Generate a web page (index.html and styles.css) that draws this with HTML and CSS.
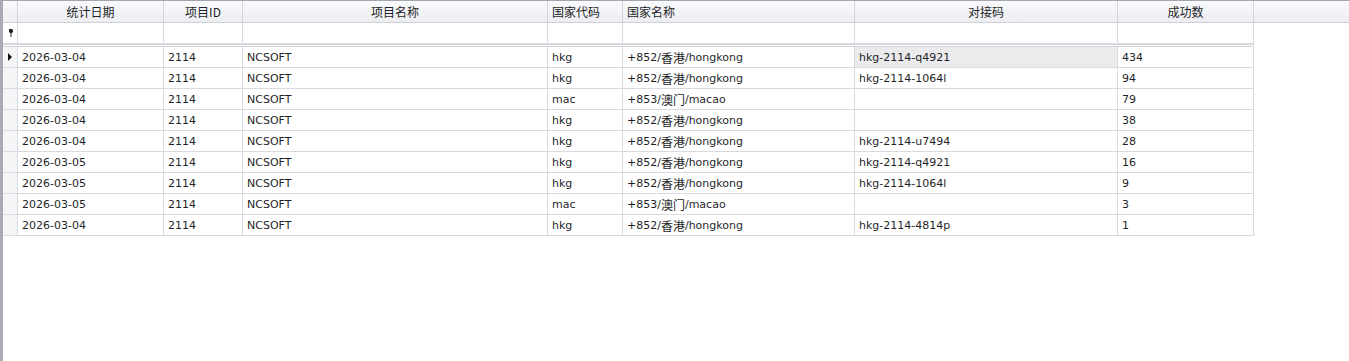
FILE: index.html
```html
<!DOCTYPE html>
<html lang="zh">
<head>
<meta charset="utf-8">
<title>Grid</title>
<link rel="stylesheet" href="styles.css">
</head>
<body>
<div class="grid">
  <div class="hdr">
    <div class="hc ind"></div>
    <div class="hc c1 ctr">统计日期</div>
    <div class="hc c2 ctr">项目ID</div>
    <div class="hc c3 ctr">项目名称</div>
    <div class="hc c4">国家代码</div>
    <div class="hc c5">国家名称</div>
    <div class="hc c6 ctr">对接码</div>
    <div class="hc c7 ctr">成功数</div>
    <div class="hc fill"></div>
  </div>
  <div class="row filter">
    <div class="cell ind"><svg width="6" height="8" viewBox="0 0 6 8"><path d="M1 0h3l1 1v2l-1 1h-0.5v4h-1v-4h-0.5l-1-1v-2z" fill="#222"/></svg></div>
    <div class="cell"></div><div class="cell"></div><div class="cell"></div><div class="cell"></div><div class="cell"></div><div class="cell"></div><div class="cell"></div>
  </div>
  <div class="sep"></div>
  <div class="row">
    <div class="cell ind"><svg width="5" height="8" viewBox="0 0 5 8"><path d="M0 0l4 4l-4 4z" fill="#111"/></svg></div>
    <div class="cell">2026-03-04</div><div class="cell">2114</div><div class="cell">NCSOFT</div><div class="cell">hkg</div><div class="cell">+852/<span class="cjk">香港</span>/hongkong</div><div class="cell focus">hkg-2114-q4921</div><div class="cell">434</div>
  </div>
  <div class="row">
    <div class="cell ind"></div>
    <div class="cell">2026-03-04</div><div class="cell">2114</div><div class="cell">NCSOFT</div><div class="cell">hkg</div><div class="cell">+852/<span class="cjk">香港</span>/hongkong</div><div class="cell">hkg-2114-1064l</div><div class="cell">94</div>
  </div>
  <div class="row">
    <div class="cell ind"></div>
    <div class="cell">2026-03-04</div><div class="cell">2114</div><div class="cell">NCSOFT</div><div class="cell">mac</div><div class="cell">+853/<span class="cjk">澳门</span>/macao</div><div class="cell"></div><div class="cell">79</div>
  </div>
  <div class="row">
    <div class="cell ind"></div>
    <div class="cell">2026-03-04</div><div class="cell">2114</div><div class="cell">NCSOFT</div><div class="cell">hkg</div><div class="cell">+852/<span class="cjk">香港</span>/hongkong</div><div class="cell"></div><div class="cell">38</div>
  </div>
  <div class="row">
    <div class="cell ind"></div>
    <div class="cell">2026-03-04</div><div class="cell">2114</div><div class="cell">NCSOFT</div><div class="cell">hkg</div><div class="cell">+852/<span class="cjk">香港</span>/hongkong</div><div class="cell">hkg-2114-u7494</div><div class="cell">28</div>
  </div>
  <div class="row">
    <div class="cell ind"></div>
    <div class="cell">2026-03-05</div><div class="cell">2114</div><div class="cell">NCSOFT</div><div class="cell">hkg</div><div class="cell">+852/<span class="cjk">香港</span>/hongkong</div><div class="cell">hkg-2114-q4921</div><div class="cell">16</div>
  </div>
  <div class="row">
    <div class="cell ind"></div>
    <div class="cell">2026-03-05</div><div class="cell">2114</div><div class="cell">NCSOFT</div><div class="cell">hkg</div><div class="cell">+852/<span class="cjk">香港</span>/hongkong</div><div class="cell">hkg-2114-1064l</div><div class="cell">9</div>
  </div>
  <div class="row">
    <div class="cell ind"></div>
    <div class="cell">2026-03-05</div><div class="cell">2114</div><div class="cell">NCSOFT</div><div class="cell">mac</div><div class="cell">+853/<span class="cjk">澳门</span>/macao</div><div class="cell"></div><div class="cell">3</div>
  </div>
  <div class="row">
    <div class="cell ind"></div>
    <div class="cell">2026-03-04</div><div class="cell">2114</div><div class="cell">NCSOFT</div><div class="cell">hkg</div><div class="cell">+852/<span class="cjk">香港</span>/hongkong</div><div class="cell">hkg-2114-4814p</div><div class="cell">1</div>
  </div>
</div>
</body>
</html>
```

FILE: styles.css
```css
html, body {
  margin: 0;
  padding: 0;
  background: #ffffff;
}
.grid {
  box-sizing: border-box;
  height: 100vh;
  border-left: 3px solid #a9aab4;
  border-top: 1px solid #a4a5ae;
  font-family: "DejaVu Sans", "Noto Sans CJK SC", sans-serif;
  font-size: 11px;
  color: #1f1f28;
  background: #ffffff;
}
.hdr {
  display: flex;
  height: 22px;
  box-sizing: border-box;
  border-bottom: 1px solid #cfd0d6;
  background: linear-gradient(#f8f9fb, #eceef1);
}
.hc {
  box-sizing: border-box;
  height: 21px;
  border-right: 1px solid #d2d3d9;
  padding-left: 4px;
  display: flex;
  align-items: center;
  font-family: "Noto Sans CJK SC", "DejaVu Sans", sans-serif;
  font-size: 12px;
  line-height: 1;
  white-space: nowrap;
  overflow: hidden;
}
.hc.ctr {
  justify-content: center;
  padding-left: 0;
}
.hc.ind { width: 15px; flex: none; padding: 0; }
.c1 { width: 146px; flex: none; }
.c2 { width: 79px; flex: none; }
.c3 { width: 305px; flex: none; }
.c4 { width: 75px; flex: none; }
.c5 { width: 232px; flex: none; }
.c6 { width: 263px; flex: none; }
.c7 { width: 136px; flex: none; }
.hc.fill { flex: 1; border-right: none; }
.row {
  display: grid;
  grid-template-columns: 15px 146px 79px 305px 75px 232px 263px 136px;
  width: 1251px;
}
.cell {
  box-sizing: border-box;
  height: 21px;
  border-right: 1px solid #d9dadf;
  border-bottom: 1px solid #d9dadf;
  padding-left: 4px;
  padding-top: 1px;
  display: flex;
  align-items: center;
  white-space: nowrap;
  overflow: hidden;
  line-height: 1;
}
.cell.ind {
  padding-left: 0;
  padding-top: 0;
  justify-content: center;
  background: #f4f5f7;
}
.filter .cell.ind {
  background: #ffffff;
  padding-left: 1px;
}
.cell.focus {
  background: #ebebee;
}
.cjk {
  font-family: "Noto Sans CJK SC", sans-serif;
  font-size: 12px;
}
.sep {
  box-sizing: border-box;
  width: 1251px;
  height: 3px;
  border-top: 1px solid #d3d4da;
  border-bottom: 1px solid #d3d4da;
  background: #ffffff;
}
```
